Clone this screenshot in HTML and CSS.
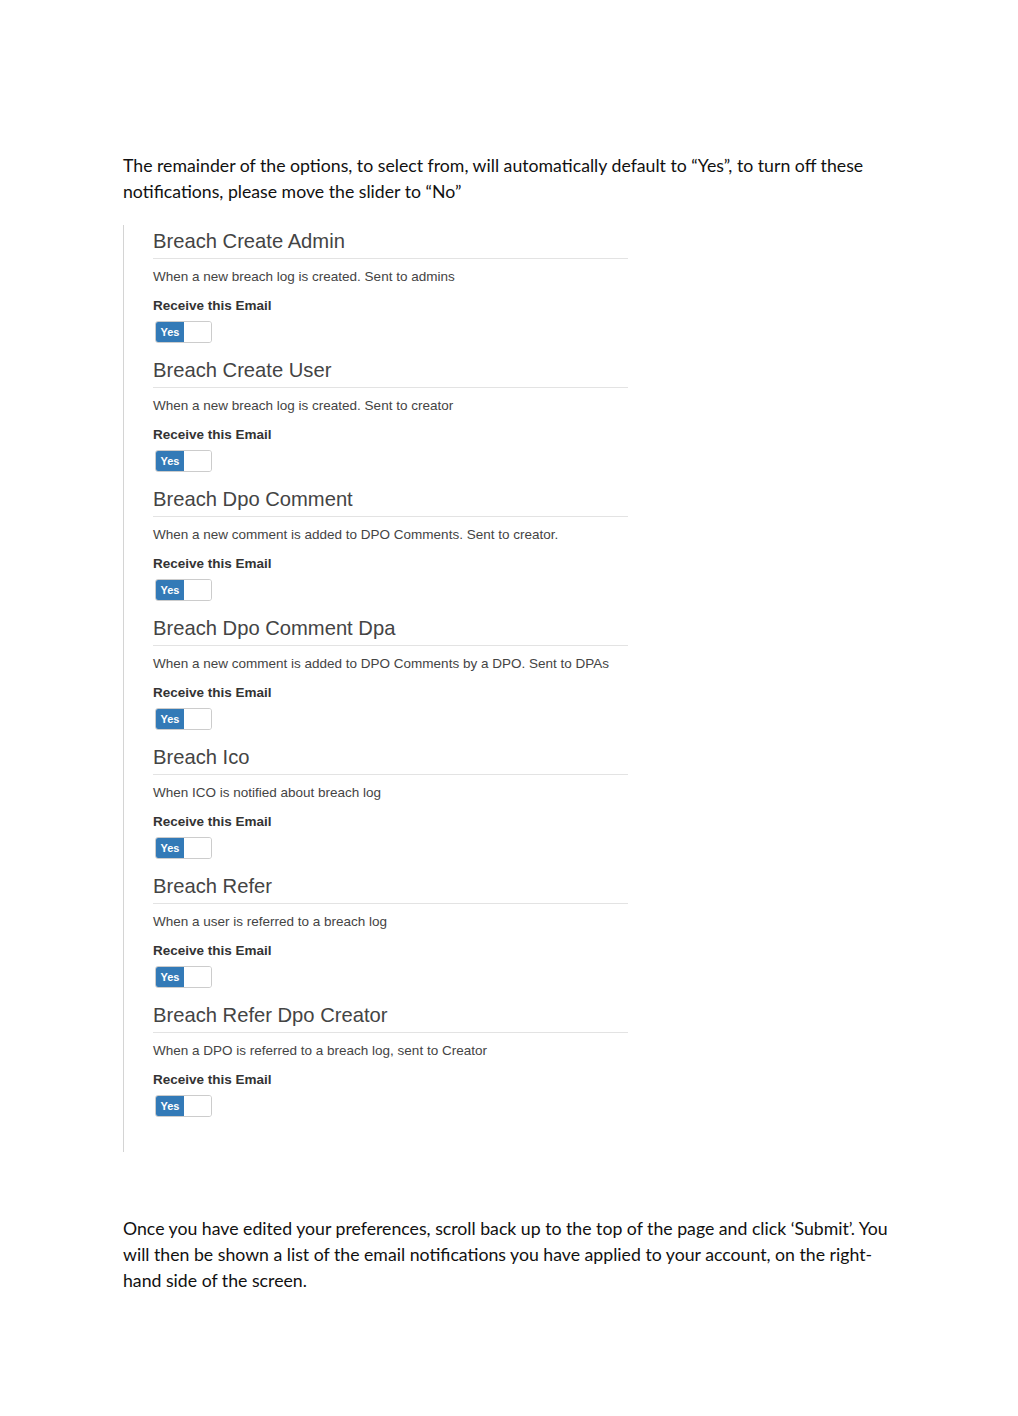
FILE: index.html
```html
<!DOCTYPE html>
<html lang="en">
<head>
<meta charset="UTF-8" />
<title>Email Notification Preferences</title>
<link rel="stylesheet" href="styles.css">
</head>
<body>
  <div class="page">
    <p class="doc-text">The remainder of the options, to select from, will automatically default to “Yes”, to turn off these notifications, please move the slider to “No”</p>

    <div class="shot">
      <div class="pref">
        <h3>Breach Create Admin</h3>
        <p class="desc">When a new breach log is created. Sent to admins</p>
        <div class="label">Receive this Email</div>
        <div class="toggle"><span class="on">Yes</span><span class="off"></span></div>
      </div>

      <div class="pref">
        <h3>Breach Create User</h3>
        <p class="desc">When a new breach log is created. Sent to creator</p>
        <div class="label">Receive this Email</div>
        <div class="toggle"><span class="on">Yes</span><span class="off"></span></div>
      </div>

      <div class="pref">
        <h3>Breach Dpo Comment</h3>
        <p class="desc">When a new comment is added to DPO Comments. Sent to creator.</p>
        <div class="label">Receive this Email</div>
        <div class="toggle"><span class="on">Yes</span><span class="off"></span></div>
      </div>

      <div class="pref">
        <h3>Breach Dpo Comment Dpa</h3>
        <p class="desc">When a new comment is added to DPO Comments by a DPO. Sent to DPAs</p>
        <div class="label">Receive this Email</div>
        <div class="toggle"><span class="on">Yes</span><span class="off"></span></div>
      </div>

      <div class="pref">
        <h3>Breach Ico</h3>
        <p class="desc">When ICO is notified about breach log</p>
        <div class="label">Receive this Email</div>
        <div class="toggle"><span class="on">Yes</span><span class="off"></span></div>
      </div>

      <div class="pref">
        <h3>Breach Refer</h3>
        <p class="desc">When a user is referred to a breach log</p>
        <div class="label">Receive this Email</div>
        <div class="toggle"><span class="on">Yes</span><span class="off"></span></div>
      </div>

      <div class="pref">
        <h3>Breach Refer Dpo Creator</h3>
        <p class="desc">When a DPO is referred to a breach log, sent to Creator</p>
        <div class="label">Receive this Email</div>
        <div class="toggle"><span class="on">Yes</span><span class="off"></span></div>
      </div>
    </div>

    <p class="doc-text after">Once you have edited your preferences, scroll back up to the top of the page and click ‘Submit’. You will then be shown a list of the email notifications you have applied to your account, on the right-hand side of the screen.</p>
  </div>
</body>
</html>
```

FILE: styles.css
```css
* {
  box-sizing: border-box;
}

body {
  margin: 0;
  background: #fff;
}

.page {
  padding: 153px 0 0 123px;
}

.doc-text {
  margin: 0;
  width: 772px;
  font-family: Lato, 'Open Sans', sans-serif;
  font-size: 17.7px;
  line-height: 26px;
  color: #111;
}

.doc-text.after {
  margin-top: 64px;
}

.shot {
  margin-top: 20px;
  width: 505px;
  border-left: 1px solid #d4d4d4;
  padding: 4px 0 35px 29px;
  font-family: 'Liberation Sans', Arial, sans-serif;
  color: #333;
}

.pref + .pref {
  margin-top: 15px;
}

.pref h3 {
  margin: 0;
  padding-bottom: 5px;
  border-bottom: 1px solid #e3e3e3;
  font-size: 20.2px;
  line-height: 24px;
  font-weight: normal;
  color: #444;
}

.desc {
  margin: 9px 0 0;
  font-size: 13.5px;
  line-height: 18px;
  color: #444;
}

.label {
  margin-top: 11px;
  font-size: 13.5px;
  line-height: 18px;
  font-weight: bold;
  color: #333;
}

.toggle {
  display: flex;
  margin-top: 6px;
  margin-left: 2px;
  width: 57px;
  height: 22px;
  border: 1px solid #ccc;
  border-radius: 3px;
  overflow: hidden;
}

.toggle .on {
  width: 28px;
  background: #337ab7;
  color: #fff;
  font-size: 11px;
  font-weight: bold;
  line-height: 20px;
  text-align: center;
}

.toggle .off {
  flex: 1;
  background: #fff;
}
```
